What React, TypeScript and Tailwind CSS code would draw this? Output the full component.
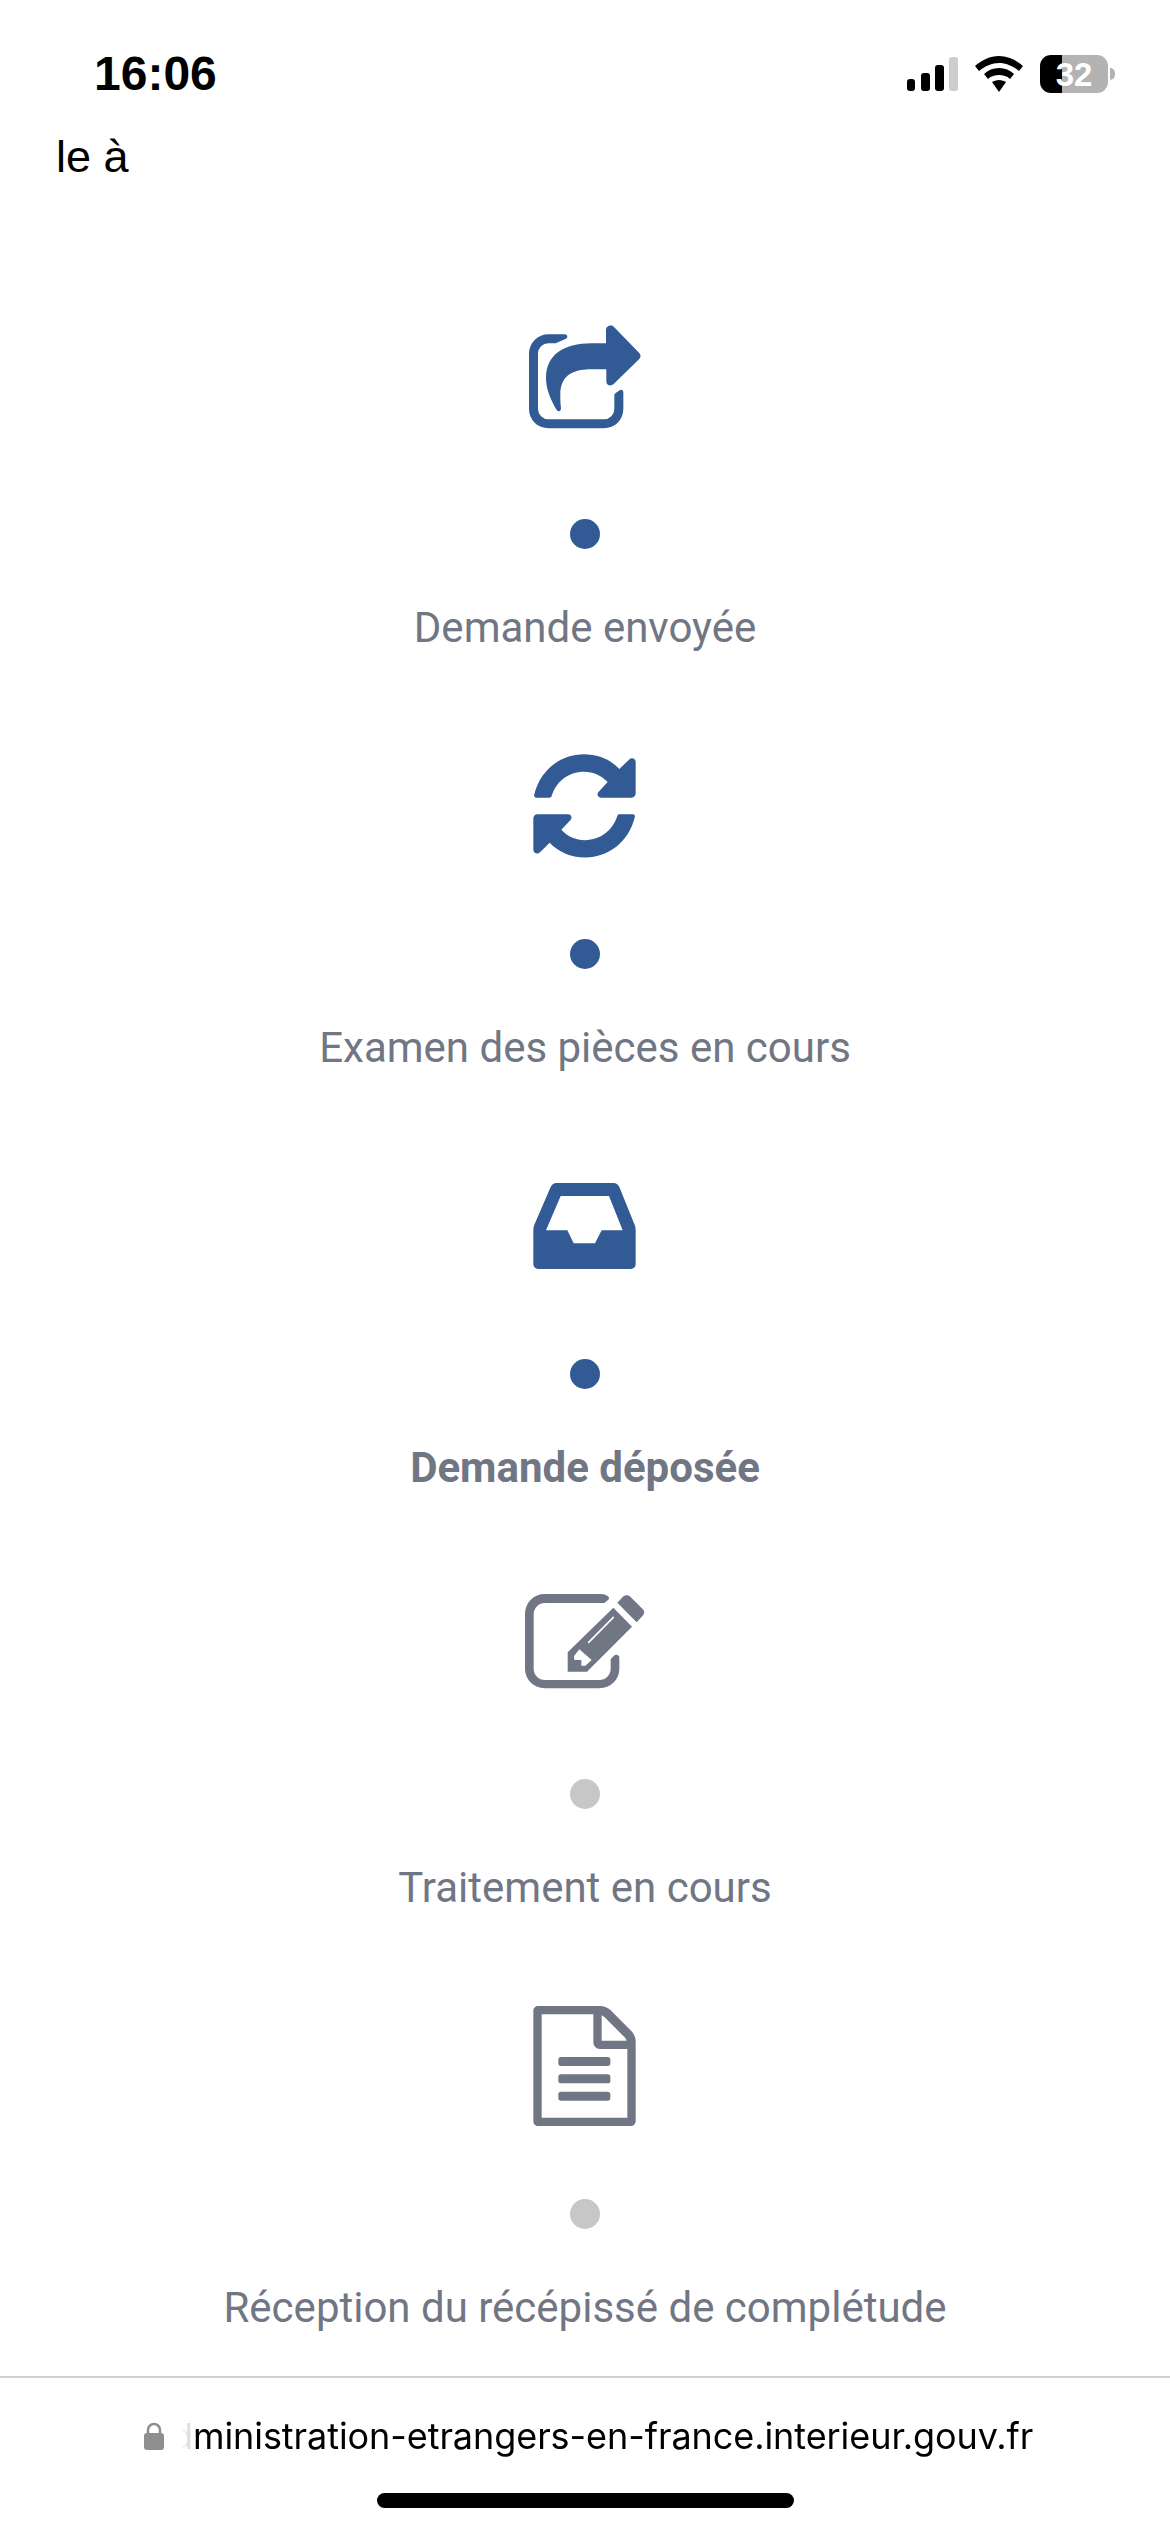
import React from 'react';

const BLUE = '#325a94';
const GRAY = '#707683';

// icons are traced in a 420 unit box, 3 units per pixel
function ShareIcon() {
  return (
    <svg className="w-[140px] h-[140px]" viewBox="90 30 420 420" fill={BLUE}>
      <path d="M238 103 H190 A58 58 0 0 0 132 161 V327 A58 58 0 0 0 190 385 H357 A58 58 0 0 0 415 327 V278 C415 270 408 267 402 272 L392 279 C389 281 388 284 388 288 V327 A31 31 0 0 1 357 358 H190 A31 31 0 0 1 159 327 V161 A31 31 0 0 1 190 130 H212 L243 116 C250 112 248 103 238 103 Z" />
      <path d="M363 90 C363 78 378 72 387 81 L462 158 C468 164 468 172 462 178 L386 252 C378 260 364 256 364 245 V208 H320 C255 208 226 232 226 285 C226 298 226 310 228 324 C228 335 220 337 215 330 C200 305 183 270 183 235 C183 165 235 130 320 130 H363 Z" />
    </svg>
  );
}

function SyncIcon() {
  const d =
    'M154 203 C148 203 146 198 148 193 C165 122 225 73 297 73 C340 73 378 90 403 117 L432 89 C440 81 452 86 452 97 V190 C452 197 447 203 440 203 H348 C338 203 334 192 341 185 L368 156 C350 136 325 125 297 125 C250 125 213 155 200 198 C199 201 197 203 194 203 Z';
  return (
    <svg className="w-[140px] h-[140px]" viewBox="90 0 420 420" fill={BLUE}>
      <path d={d} />
      <path d={d} transform="rotate(180 298.5 227.75)" />
    </svg>
  );
}

function InboxIcon() {
  return (
    <svg className="w-[140px] h-[140px]" viewBox="90 -30 420 420" fill={BLUE}>
      <path
        fillRule="evenodd"
        d="M215 69 H385 C393 69 400 74 403 81 L447 190 C450 196 452 203 452 210 V313 C452 321 446 327 438 327 H159 C151 327 145 321 145 313 V210 C145 203 147 196 150 190 L197 81 C200 74 207 69 215 69 Z M227 108 L183 211 H247 L266 250 H330 L350 211 H413 L372 108 Z"
      />
    </svg>
  );
}

function EditIcon() {
  return (
    <svg className="w-[140px] h-[140px]" viewBox="90 0 420 420" fill={GRAY}>
      <path d="M179 72 H345 C358 72 366 75 371 81 C373 84 372 87 370 89 L358 99 H180 A34 34 0 0 0 146 133 V296 A34 34 0 0 0 180 330 H343 A34 34 0 0 0 377 296 V268 L388 256 C394 252 403 255 403 262 V296 A59 59 0 0 1 344 355 H179 A59 59 0 0 1 120 296 V131 A59 59 0 0 1 179 72 Z" />
      <path d="M385 113 L441 170 L306 305 H248 V247 Z" />
      <path d="M397 98 L414 80 C420 74 430 74 436 80 L473 117 C479 123 479 131 473 137 L455 157 Z" />
      <path d="M311 217 L385 142" stroke="#fff" strokeWidth="5" strokeLinecap="round" />
      <path d="M267 258 L283 238 L320 270 L301 287 H289 V270 H268 Z" fill="#fff" />
    </svg>
  );
}

function FileIcon() {
  return (
    <svg className="w-[140px] h-[140px]" viewBox="90 30 420 420" fill={GRAY}>
      <path
        fillRule="evenodd"
        d="M160 78 H345 C357 78 369 83 377 91 L438 152 C447 161 452 173 452 185 V423 C452 432 445 438 437 438 H160 C151 438 145 432 145 423 V93 C145 84 151 78 160 78 Z M170 103 V413 H427 V207 H345 C334 207 325 198 325 187 V103 Z M350 106 V182 H425 C424 178 421 174 418 171 L362 115 C358 111 354 108 350 106 Z"
      />
      <rect x="220" y="231" width="156" height="27" rx="8" />
      <rect x="220" y="283" width="156" height="27" rx="8" />
      <rect x="220" y="335" width="156" height="27" rx="8" />
    </svg>
  );
}

function Step({ icon, label, done, bold }: { icon: React.ReactNode; label: string; done?: boolean; bold?: boolean }) {
  return (
    <div className="h-[420px] flex flex-col items-center">
      {icon}
      <div className={`mt-[69px] w-[30px] h-[30px] rounded-full ${done ? 'bg-[#325a94]' : 'bg-[#c7c7c7]'}`} />
      <p className={`mt-[56px] text-[42px] leading-[46px] text-[#707683] ${bold ? 'font-bold' : ''}`}>{label}</p>
    </div>
  );
}

function StatusIcons() {
  return (
    <div className="flex items-center">
      <svg className="w-[52px] h-[34px]" viewBox="0 0 52 34">
        <rect x="0" y="22" width="8" height="12" rx="3" fill="#000" />
        <rect x="14" y="16" width="9" height="18" rx="3" fill="#000" />
        <rect x="28" y="8" width="9" height="26" rx="3" fill="#000" />
        <rect x="42" y="0" width="9" height="34" rx="3" fill="#cdcdcd" />
      </svg>
      <svg className="ml-[16px] w-[48px] h-[36px]" viewBox="0 0 48 36">
        <path d="M24 0 C33 0 41 4 48 10 L44 15 C38 10 31 7 24 7 C17 7 10 10 4 15 L0 10 C7 4 15 0 24 0 Z" />
        <path d="M24 12 C30 12 35 14 39 18 L35 23 C32 20 28 19 24 19 C20 19 16 20 13 23 L9 18 C13 14 18 12 24 12 Z" />
        <path d="M24 24 C27 24 29 25 31 26 L24 36 L17 26 C19 25 21 24 24 24 Z" />
      </svg>
      <div className="ml-[17px] relative w-[68px] h-[38px] rounded-[11px] overflow-hidden flex">
        <div className="w-[22px] bg-black" />
        <div className="flex-1 bg-[#b3b3b3]" />
        <span className="absolute inset-0 flex items-center justify-center text-[33px] leading-none font-bold text-white font-['Liberation_Sans',sans-serif]">
          32
        </span>
      </div>
      <div className="ml-[2px] w-[5px] h-[12px] rounded-r-full bg-[#b3b3b3]" />
    </div>
  );
}

export default function App() {
  return (
    <div className="relative w-[1170px] h-[2532px] overflow-hidden bg-white font-['Roboto',sans-serif]">
      <div className="h-[128px] pt-[50px] pl-[94px] pr-[55px] flex justify-between items-start">
        <span className="text-[48px] leading-[48px] font-bold text-black font-['Liberation_Sans',sans-serif]">16:06</span>
        <div className="mt-[5px] ml-[2px]">
          <StatusIcons />
        </div>
      </div>
      <p className="pt-[3px] pl-[56px] text-[45px] leading-[52px] text-black font-['Liberation_Sans',sans-serif]">le à</p>
      <div className="mt-[127px]">
        <Step icon={<ShareIcon />} label="Demande envoyée" done />
        <Step icon={<SyncIcon />} label="Examen des pièces en cours" done />
        <Step icon={<InboxIcon />} label="Demande déposée" done bold />
        <Step icon={<EditIcon />} label="Traitement en cours" />
        <Step icon={<FileIcon />} label="Réception du récépissé de complétude" />
      </div>

      {/* safari address bar sits over the page */}
      <div className="absolute left-0 right-0 bottom-0 h-[156px] bg-white border-t-2 border-[#d0d0d2]">
        <div className="mt-[35px] pl-[144px] flex items-center h-[46px]">
          <svg className="w-[20px] h-[28px] shrink-0" viewBox="0 0 20 28" fill="#8e8e8e">
            <path d="M4 12 V8 A6 6 0 0 1 16 8 V12" fill="none" stroke="#8e8e8e" strokeWidth="2.5" />
            <rect x="0" y="11" width="20" height="17" rx="3" />
          </svg>
          {/* the scrolled url fades out under the lock */}
          <div className="ml-[17px] overflow-hidden">
            <span className="block ml-[-10px] whitespace-nowrap text-[36px] leading-[46px] tracking-[-0.07px] font-['Inter',sans-serif] text-transparent bg-clip-text bg-[linear-gradient(90deg,#ffffff_10px,#dddddd_18px,#dddddd_21px,#000000_23px)]">
              dministration-etrangers-en-france.interieur.gouv.fr
            </span>
          </div>
        </div>
        <div className="mt-[34px] mx-auto w-[417px] h-[15px] rounded-full bg-black" />
      </div>
    </div>
  );
}
